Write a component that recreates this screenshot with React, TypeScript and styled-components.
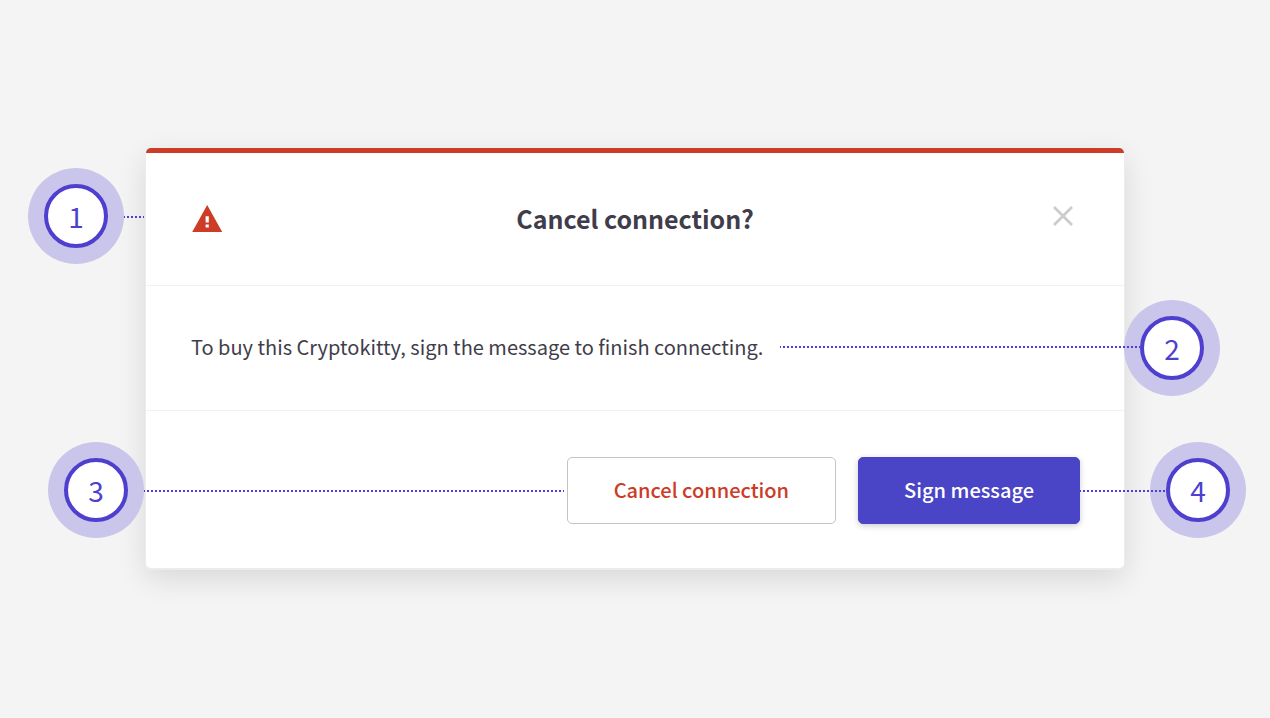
import React from 'react';
import styled, { createGlobalStyle, css } from 'styled-components';

const colors = {
  page: '#f4f4f4',
  danger: '#cc3c26',
  primary: '#4a44c6',
  note: '#4e3fce',
  ring: '#cac5ea',
  text: '#3f3d4b',
};

const GlobalStyle = createGlobalStyle`
  *, *::before, *::after { box-sizing: border-box; }
  body {
    margin: 0;
    background: ${colors.page};
    color: ${colors.text};
    font-family: 'Noto Sans CJK SC', 'Noto Sans', sans-serif;
  }
`;

const Page = styled.main`
  display: flex;
  align-items: center;
  justify-content: center;
  min-height: 100vh;
  padding: 24px 146px 26px;
`;

const Dialog = styled.section`
  flex: 1;
  max-width: 980px;
  background: #fff;
  border-top: 5px solid ${colors.danger};
  border-radius: 5px;
  box-shadow: 0 1px 0 1px #ececec, 0 10px 30px rgba(0, 0, 0, 0.12);
`;

const Header = styled.header`
  position: relative;
  display: grid;
  grid-template-columns: 32px 1fr 32px;
  align-items: center;
  height: 132px;
  padding: 0 45px;
`;

const Title = styled.h1`
  margin: 0;
  padding-bottom: 2px;
  font-size: 25px;
  line-height: 36px;
  font-weight: 700;
  text-align: center;
`;

const CloseButton = styled.button`
  display: flex;
  justify-content: center;
  padding: 0 0 6px;
  border: 0;
  background: none;
  color: #cccccc;
  cursor: pointer;
`;

const Body = styled.div`
  position: relative;
  padding: 45px 45px 47px;
  border: solid #f2f2f2;
  border-width: 1px 0;
`;

const Message = styled.p`
  margin: 0;
  font-size: 20px;
  line-height: 32px;
`;

const Footer = styled.footer`
  position: relative;
  display: flex;
  justify-content: flex-end;
  gap: 22px;
  padding: 46px 44px 44px;
`;

const Button = styled.button<{ $primary?: boolean }>`
  height: 67px;
  padding: 0 46px 2px;
  border: 1px solid #c4c4c4;
  border-radius: 5px;
  background: #fff;
  color: ${colors.danger};
  font: 500 20px/32px 'Noto Sans CJK SC', 'Noto Sans', sans-serif;
  cursor: pointer;
  ${({ $primary }) =>
    $primary &&
    css`
      padding: 0 45px 2px;
      border-color: ${colors.primary};
      background: ${colors.primary};
      color: #fff;
      box-shadow: 0 2px 6px rgba(0, 0, 0, 0.2);
    `}
`;

type Side = 'left' | 'right';

const Note = styled.div<{ $side: Side; $out: number; $top: number; $reach: number }>`
  position: absolute;
  ${({ $side, $out }) => `${$side}: -${$out}px;`}
  top: ${({ $top }) => $top}px;
  width: ${({ $reach }) => $reach}px;
  display: flex;
  flex-direction: ${({ $side }) => ($side === 'left' ? 'row' : 'row-reverse')};
  align-items: center;
  pointer-events: none;
`;

const Badge = styled.span`
  flex: none;
  width: 96px;
  height: 96px;
  padding: 16px;
  border-radius: 50%;
  background: ${colors.ring};
`;

const BadgeNumber = styled.span`
  display: flex;
  align-items: center;
  justify-content: center;
  height: 64px;
  border: 4px solid ${colors.note};
  border-radius: 50%;
  background: #fff;
  color: ${colors.note};
  font-size: 28px;
  line-height: 40px;
`;

const Leader = styled.span<{ $side: Side; $drop: number }>`
  flex: 1;
  height: 2px;
  margin-top: ${({ $drop }) => $drop}px;
  margin-right: ${({ $side }) => ($side === 'right' ? -16 : 0)}px;
  z-index: 1;
  background: repeating-linear-gradient(
    90deg,
    ${colors.note} 0 1px,
    transparent 1px 3px,
    ${colors.note} 3px 4px
  );
`;

interface AnnotationProps {
  label: number;
  side: Side;
  out: number;
  top: number;
  reach: number;
  drop?: number;
}

function Annotation({ label, side, out, top, reach, drop = 2 }: AnnotationProps) {
  return (
    <Note $side={side} $out={out} $top={top} $reach={reach}>
      <Badge>
        <BadgeNumber>{label}</BadgeNumber>
      </Badge>
      <Leader $side={side} $drop={drop} />
    </Note>
  );
}

function WarningIcon() {
  return (
    <svg width="32" height="32" viewBox="0 0 32 32" role="img" aria-label="Warning">
      <path
        fill={colors.danger}
        fillRule="evenodd"
        d="M16.2 2 31.2 29H1.2ZM14.6 13.2V19.6H17.8V13.2ZM14.6 21.6V24.6H17.8V21.6Z"
      />
    </svg>
  );
}

function CloseIcon() {
  return (
    <svg width="22" height="22" viewBox="0 0 22 22" aria-hidden="true">
      <path d="M2 2 20 20M20 2 2 20" fill="none" stroke="currentColor" strokeWidth="2.8" />
    </svg>
  );
}

export default function App() {
  return (
    <>
      <GlobalStyle />
      <Page>
        <Dialog role="dialog" aria-labelledby="dialog-title">
          <Header>
            <WarningIcon />
            <Title id="dialog-title">Cancel connection?</Title>
            <CloseButton type="button" aria-label="Close">
              <CloseIcon />
            </CloseButton>
            <Annotation label={1} side="left" out={118} top={15} reach={116} />
          </Header>
          <Body>
            <Message>To buy this Cryptokitty, sign the message to finish connecting.</Message>
            <Annotation label={2} side="right" out={96} top={14} reach={440} drop={-2} />
          </Body>
          <Footer>
            <Button type="button">Cancel connection</Button>
            <Button type="button" $primary>
              Sign message
            </Button>
            <Annotation label={3} side="left" out={98} top={31} reach={516} />
            <Annotation label={4} side="right" out={122} top={31} reach={166} />
          </Footer>
        </Dialog>
      </Page>
    </>
  );
}
